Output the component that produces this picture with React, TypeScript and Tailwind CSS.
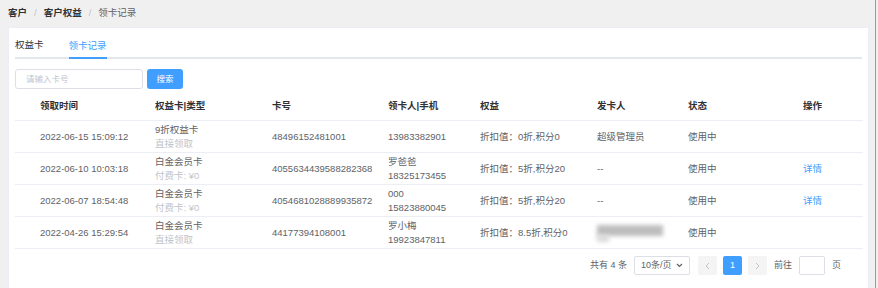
import React from "react";

const font = { fontFamily: '"Liberation Sans", "Noto Sans CJK SC", sans-serif' };

type Row = {
  time: string;
  card: string;
  sub: string;
  no: string;
  name?: string;
  phone: string;
  right: string;
  issuer: string;
  status: string;
  op?: string;
};

const rows: Row[] = [
  { time: "2022-06-15 15:09:12", card: "9折权益卡", sub: "直接领取", no: "48496152481001", phone: "13983382901", right: "折扣值：0折,积分0", issuer: "超级管理员", status: "使用中" },
  { time: "2022-06-10 10:03:18", card: "白金会员卡", sub: "付费卡: ¥0", no: "4055634439588282368", name: "罗爸爸", phone: "18325173455", right: "折扣值：5折,积分20", issuer: "--", status: "使用中", op: "详情" },
  { time: "2022-06-07 18:54:48", card: "白金会员卡", sub: "付费卡: ¥0", no: "4054681028889935872", name: "000", phone: "15823880045", right: "折扣值：5折,积分20", issuer: "--", status: "使用中", op: "详情" },
  { time: "2022-04-26 15:29:54", card: "白金会员卡", sub: "直接领取", no: "44177394108001", name: "罗小梅", phone: "19923847811", right: "折扣值：8.5折,积分0", issuer: "", status: "使用中" },
];

const cols = "grid grid-cols-[140px_117px_116px_92px_117px_91px_115px_59px]";

export default function App() {
  return (
    <div className="w-[878px] h-[288px] bg-[#f0f0f0] flex text-[9.5px] text-[#606266]" style={font}>
      <div className="w-[874px] flex flex-col">
        {/* breadcrumb */}
        <div className="h-[27px] flex items-center pl-2 gap-[7px]">
          <span className="font-bold text-[#303133]">客户</span>
          <span className="text-[#c0c4cc]">/</span>
          <span className="font-bold text-[#303133]">客户权益</span>
          <span className="text-[#c0c4cc]">/</span>
          <span className="text-[#606266]">领卡记录</span>
        </div>

        <div className="ml-2 w-[861px] flex-1 bg-white border border-[#ebeef5] border-b-0 px-[6px] pt-[6px]">
          {/* tabs */}
          <div className="h-[25px] flex items-end gap-[25px] border-b-2 border-[#e4e7ed]">
            <div className="h-[23px] flex items-center text-[#303133]">权益卡</div>
            <div className="h-[23px] flex items-center text-[#409eff] border-b-2 border-[#409eff] -mb-[2px]">领卡记录</div>
          </div>

          {/* search */}
          <div className="mt-[10px] flex items-center gap-[4px]">
            <div className="w-[128px] h-[20px] border border-[#dcdfe6] rounded-[3px] flex items-center pl-[10px] text-[#c0c4cc] text-[8.5px]">请输入卡号</div>
            <div className="w-[36px] h-[20px] bg-[#409eff] rounded-[3px] flex items-center justify-center text-white text-[8.5px]">搜索</div>
          </div>

          {/* table */}
          <div className="mt-[4px] w-[848px]">
            <div className={`${cols} h-[28px] items-center border-b border-[#ebeef5] font-bold text-[#303133]`}>
              <div className="pl-[25px]">领取时间</div>
              <div>权益卡|类型</div>
              <div>卡号</div>
              <div>领卡人|手机</div>
              <div>权益</div>
              <div>发卡人</div>
              <div>状态</div>
              <div>操作</div>
            </div>
            {rows.map((r, i) => (
              <div key={i} className={`${cols} h-[32px] items-center border-b border-[#ebeef5] leading-[14px]`}>
                <div className="pl-[25px]">{r.time}</div>
                <div className="flex flex-col">
                  <span>{r.card}</span>
                  <span className="text-[#c0c4cc]">{r.sub}</span>
                </div>
                <div>{r.no}</div>
                <div className="flex flex-col">
                  {r.name && <span>{r.name}</span>}
                  <span>{r.phone}</span>
                </div>
                <div>{r.right}</div>
                <div>
                  {r.issuer || (
                    <div className="relative h-[20px] w-[70px]">
                      <div className="absolute left-0 top-[2px] w-[66px] h-[11px] bg-[#bdbdbd] blur-[2px]" />
                      <div className="absolute left-0 top-[12px] w-[12px] h-[7px] bg-[#dadada] blur-[2px]" />
                    </div>
                  )}
                </div>
                <div>{r.status}</div>
                <div className="text-[#409eff]">{r.op}</div>
              </div>
            ))}
          </div>

          {/* pagination */}
          <div className="mt-[7px] w-[848px] flex items-center justify-end pr-[22px] text-[9px]">
            <span className="text-[#606266] mr-[7px]">共有 4 条</span>
            <div className="w-[56px] h-[19px] border border-[#dcdfe6] rounded-[2px] flex items-center justify-between px-[6px] mr-[8px]">
              <span>10条/页</span>
              <svg width="7" height="5" viewBox="0 0 7 5"><path d="M1 1l2.5 2.5L6 1" stroke="#606266" strokeWidth="1.2" fill="none" /></svg>
            </div>
            <div className="w-[19px] h-[19px] bg-[#f4f4f5] rounded-[2px] flex items-center justify-center mr-[6px]">
              <svg width="5" height="8" viewBox="0 0 5 8"><path d="M4 1L1 4l3 3" stroke="#c0c4cc" strokeWidth="1" fill="none" /></svg>
            </div>
            <div className="w-[19px] h-[19px] bg-[#409eff] rounded-[2px] flex items-center justify-center text-white mr-[6px]">1</div>
            <div className="w-[19px] h-[19px] bg-[#f4f4f5] rounded-[2px] flex items-center justify-center mr-[7px]">
              <svg width="5" height="8" viewBox="0 0 5 8"><path d="M1 1l3 3-3 3" stroke="#c0c4cc" strokeWidth="1" fill="none" /></svg>
            </div>
            <span className="mr-[7px]">前往</span>
            <div className="w-[26px] h-[19px] border border-[#dcdfe6] rounded-[2px] mr-[7px]" />
            <span>页</span>
          </div>
        </div>
      </div>
      <div className="w-[4px] flex">
        <div className="w-px bg-[#9a9a9a] ml-[1px]" />
      </div>
    </div>
  );
}
